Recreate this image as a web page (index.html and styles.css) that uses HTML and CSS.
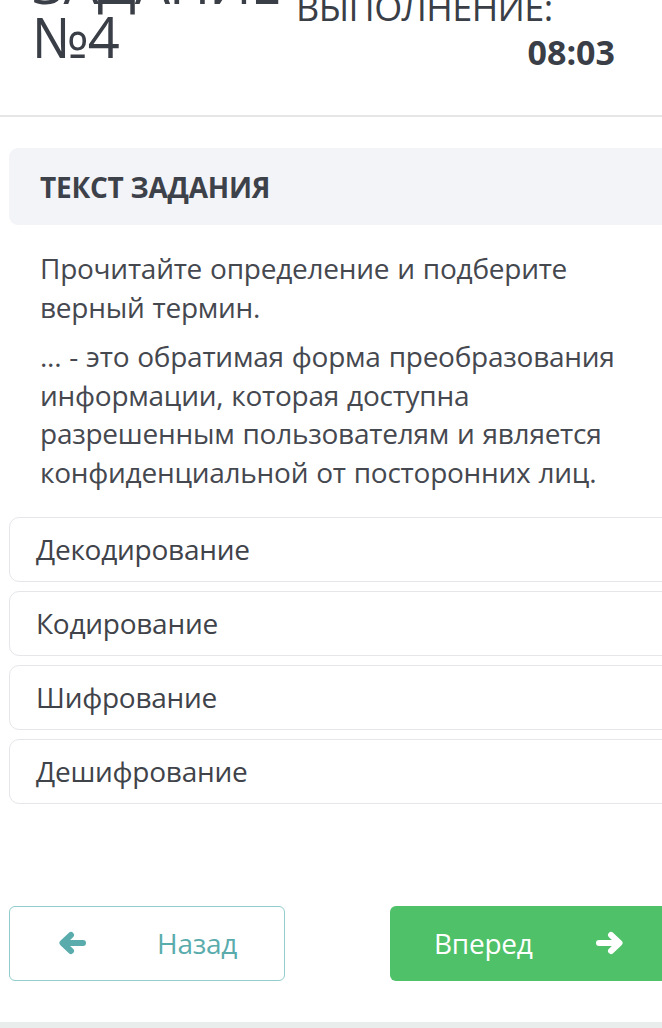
FILE: index.html
```html
<!DOCTYPE html>
<html lang="ru">
<head>
<meta charset="utf-8">
<link rel="stylesheet" href="styles.css">
</head>
<body>
<div class="page">
  <header class="top">
    <div class="title">ЗАДАНИЕ<br>№4</div>
    <div class="timer">
      <div class="timer-label">ВРЕМЯ НА<br>ВЫПОЛНЕНИЕ:</div>
      <div class="timer-value">08:03</div>
    </div>
  </header>
  <div class="divider"></div>
  <main class="content">
    <div class="section-head">ТЕКСТ ЗАДАНИЯ</div>
    <div class="question">
      <p class="q1">Прочитайте определение и подберите верный термин.</p>
      <p class="q2">... - это обратимая форма преобразования информации, которая доступна разрешенным пользователям и является конфиденциальной от посторонних лиц.</p>
    </div>
    <div class="options">
      <div class="option">Декодирование</div>
      <div class="option">Кодирование</div>
      <div class="option">Шифрование</div>
      <div class="option">Дешифрование</div>
    </div>
    <div class="nav">
      <div class="btn btn-back">
        <svg class="ico" width="28" height="24" viewBox="0 0 28 24"><path d="M25 12H5M13 4L4.5 12L13 20" fill="none" stroke="currentColor" stroke-width="6" stroke-linecap="round" stroke-linejoin="round"/></svg>
        <span class="btn-text">Назад</span>
      </div>
      <div class="btn btn-next">
        <span class="btn-text">Вперед</span>
        <svg class="ico" width="28" height="24" viewBox="0 0 28 24"><path d="M3 12H23M15 4L23.5 12L15 20" fill="none" stroke="currentColor" stroke-width="6" stroke-linecap="round" stroke-linejoin="round"/></svg>
      </div>
    </div>
  </main>
  <div class="bottom-band"></div>
</div>
</body>
</html>
```
FILE: styles.css
```css
html, body {
  margin: 0;
  padding: 0;
  background: #ffffff;
  overflow: hidden;
}
body {
  font-family: "Open Sans", "Noto Sans", sans-serif;
  color: #3d4149;
  width: 662px;
  height: 1028px;
}
.page {
  width: 662px;
  height: 1028px;
  display: flex;
  flex-direction: column;
  overflow: hidden;
}
.top {
  display: flex;
  margin-top: -54px;
  padding-left: 32px;
  height: 169px;
  box-sizing: border-box;
}
.title {
  font-size: 56px;
  line-height: 54px;
  font-weight: 400;
  color: #3a3e46;
  width: 264px;
  flex-shrink: 0;
  padding-top: 9px;
  letter-spacing: -1.2px;
}
.timer {
  width: 319px;
  flex-shrink: 0;
  display: flex;
  flex-direction: column;
}
.timer-label {
  font-size: 36px;
  line-height: 38px;
  color: #3a3e46;
  letter-spacing: -0.6px;
  padding-top: 5px;
}
.timer-value {
  text-align: right;
  font-size: 34px;
  font-weight: 700;
  color: #3a3e46;
  line-height: 40px;
  margin-top: 5px;
}
.divider {
  height: 2px;
  background: #e6e6e6;
}
.content {
  padding-left: 9px;
  display: flex;
  flex-direction: column;
}
.section-head {
  margin-top: 31px;
  width: 680px;
  flex-shrink: 0;
  height: 77px;
  box-sizing: border-box;
  background: #f3f4f8;
  border-radius: 9px;
  padding-left: 31px;
  display: flex;
  align-items: center;
  font-size: 28px;
  font-weight: 700;
  letter-spacing: -0.25px;
  color: #3d4149;
}
.question {
  padding: 24px 0 0 31px;
  font-size: 28px;
  line-height: 38.6px;
  color: #45484f;
  letter-spacing: -0.25px;
  word-spacing: 1px;
}
.question p {
  margin: 0;
}
.q1 {
  width: 560px;
}
.q2 {
  margin-top: 11px !important;
  width: 600px;
}
.options {
  margin-top: 25px;
  display: flex;
  flex-direction: column;
  gap: 9px;
}
.option {
  width: 680px;
  height: 65px;
  box-sizing: border-box;
  border: 1px solid #e4e6ea;
  border-radius: 10px;
  padding-left: 26px;
  display: flex;
  align-items: center;
  font-size: 28px;
  color: #404349;
  letter-spacing: -0.25px;
}
.nav {
  margin-top: 102px;
  display: flex;
  gap: 105px;
}
.btn {
  flex-shrink: 0;
  height: 75px;
  box-sizing: border-box;
  border-radius: 6px;
  display: flex;
  align-items: center;
  font-size: 28px;
  letter-spacing: -0.25px;
}
.btn-back {
  width: 276px;
  border: 1px solid #93cccc;
  color: #5aacac;
  padding-left: 48px;
}
.btn-back .btn-text {
  margin-left: 71px;
}
.btn-next {
  width: 290px;
  background: #4fc169;
  color: #ffffff;
  padding-left: 44px;
}
.btn-next .btn-text {
  margin-right: 63px;
}
.bottom-band {
  margin-top: auto;
  height: 6px;
  background: #e9edec;
}
```
